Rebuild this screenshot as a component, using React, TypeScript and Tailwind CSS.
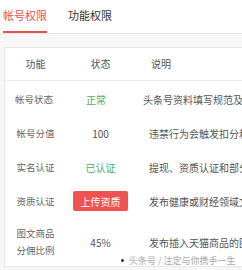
const rows = [
  { name: ['帐号状态'], status: '正常', kind: 'green', desc: '头条号资料填写规范及帐号状态说明' },
  { name: ['帐号分值'], status: '100', kind: 'plain', desc: '违禁行为会触发扣分和相应处罚' },
  { name: ['实名认证'], status: '已认证', kind: 'green', desc: '提现、资质认证和部分功能需实名' },
  { name: ['资质认证'], status: '上传资质', kind: 'button', desc: '发布健康或财经领域文章需资质' },
  { name: ['图文商品', '分佣比例'], status: '45%', kind: 'plain', desc: '发布插入天猫商品的图文可获分佣' },
];

function StatusCell({ status, kind }: { status: string; kind: string }) {
  if (kind === 'button') {
    return (
      <span className="flex h-[20px] w-[55px] items-center justify-center rounded-[2px] bg-[#f05252] text-[10px] text-white">
        {status}
      </span>
    );
  }
  return (
    <span className={kind === 'green' ? 'text-[10px] text-[#4cae66]' : 'text-[10px] text-[#555]'}>
      {status}
    </span>
  );
}

export default function App() {
  return (
    <div
      className="relative h-[270px] w-[242px] overflow-hidden bg-[#f7f7f7]"
      style={{ fontFamily: '"Noto Sans CJK SC", "Noto Sans", sans-serif' }}
    >
      {/* tabs */}
      <div className="flex h-[34px] gap-[21px] border-b border-[#e6e6e6] bg-white px-[3px]">
        <div className="border-b-2 border-[#e8504c] text-[11px] leading-[31px] text-[#e8504c]">帐号权限</div>
        <div className="text-[11px] leading-[31px] text-[#333]">功能权限</div>
      </div>

      {/* card; the description column runs past the right edge like the screenshot */}
      <div className="ml-[4px] mt-[13px] w-[300px] border border-[#e8e8e8] bg-white">
        <div className="flex h-[33px] items-center border-b border-[#ebebeb] pb-[2px] text-[10px] text-[#555]">
          <div className="w-[61px] text-center">功能</div>
          <div className="w-[69px] text-center">状态</div>
          <div className="pl-[16px]">说明</div>
        </div>
        <div className="pt-[1px]">
          {rows.map((r) => (
            <div key={r.name[0]} className={r.name.length > 1 ? 'flex h-[48px] items-center' : 'flex h-[34px] items-center'}>
              <div className="flex w-[61px] flex-col items-center text-[9.5px] leading-[17px] text-[#666]">
                {r.name.map((n) => (
                  <span key={n}>{n}</span>
                ))}
              </div>
              <div className="flex w-[69px] justify-center">
                <StatusCell status={r.status} kind={r.kind} />
              </div>
              <div className="whitespace-nowrap pl-[14px] text-[10px] text-[#555]">{r.desc}</div>
            </div>
          ))}
        </div>
      </div>

      {/* watermark */}
      <div className="absolute left-[121px] top-[254px] flex items-center gap-[5px] text-[9px] text-[#a9a9a9] [text-shadow:0_0_2px_#fff,0_0_1px_#fff]">
        <span className="h-[3px] w-[3px] rounded-full bg-[#333]" />
        <span>头条号 / 注定与你携手一生</span>
      </div>
    </div>
  );
}
